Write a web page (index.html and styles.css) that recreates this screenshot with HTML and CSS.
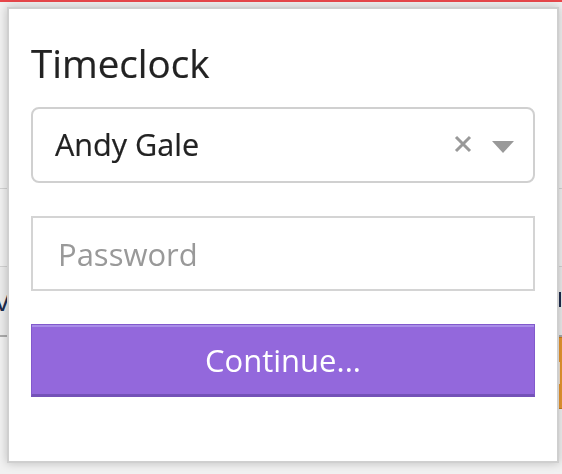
FILE: index.html
```html
<!DOCTYPE html>
<html lang="en">
<head>
<meta charset="utf-8">
<title>Timeclock</title>
<link rel="stylesheet" href="styles.css">
</head>
<body>
<div class="page">
  <div class="topbar"></div>
  <div class="row row-a"></div>
  <div class="row row-b"></div>
  <div class="row row-c">
    <span class="cut-word">Nov</span>
    <span class="cut-mark"></span>
  </div>
  <div class="row row-d">
    <span class="cut-button"><span class="cut-button-inner"></span></span>
  </div>
</div>

<div class="modal">
  <h1 class="title">Timeclock</h1>
  <div class="select">
    <span class="select-value">Andy Gale</span>
    <span class="select-icons">
      <svg class="icon-clear" width="18" height="18" viewBox="0 0 18 18" aria-hidden="true">
        <path d="M2 2 L16 16 M16 2 L2 16" stroke="#999" stroke-width="3" fill="none"/>
      </svg>
      <svg class="icon-caret" width="22" height="12" viewBox="0 0 22 12" aria-hidden="true">
        <path d="M0 0 H22 L11 12 Z" fill="#999"/>
      </svg>
    </span>
  </div>
  <div class="input"><span class="placeholder">Password</span></div>
  <div class="button">Continue...</div>
</div>
</body>
</html>
```

FILE: styles.css
```css
html, body {
  margin: 0;
  padding: 0;
}

body {
  background: #f1f1f1;
  font-family: "Open Sans", "Liberation Sans", sans-serif;
  overflow: hidden;
}

.page {
  display: flex;
  flex-direction: column;
}

.topbar {
  height: 2px;
  background: #e8474b;
}

.row {
  display: flex;
  justify-content: space-between;
  align-items: flex-start;
}

.row-a {
  height: 186px;
  border-bottom: 1px solid #d2d2d2;
}

.row-b {
  height: 77px;
  border-bottom: 1px solid #d2d2d2;
}

.row-c {
  height: 68px;
  border-bottom: 2px solid #ababab;
  align-items: center;
  background: #ececec;
}

.cut-word {
  font-size: 30px;
  color: #1c2c4e;
  margin-left: -46px;
  line-height: 30px;
  margin-top: -2px;
}

.cut-mark {
  width: 3px;
  height: 15px;
  background: #1d2b4d;
  margin-right: 1px;
  margin-top: -4px;
}

.row-d {
  justify-content: flex-end;
}

.cut-button {
  display: flex;
  align-items: center;
  width: 4px;
  height: 70px;
  background: #e8972f;
  border-top: 1px solid #c97c1e;
  border-bottom: 1px solid #c97c1e;
}

.cut-button-inner {
  width: 1px;
  height: 22px;
  margin-left: 1px;
  background: #f6e4cc;
}

.modal {
  position: fixed;
  left: 7px;
  top: 7px;
  width: 552px;
  height: 456px;
  box-sizing: border-box;
  background: #fff;
  border: 2px solid #cfcfcf;
  box-shadow: 0 0 9px rgba(0, 0, 0, 0.22);
  padding: 31px 22px 0;
  display: flex;
  flex-direction: column;
}

.title {
  margin: 0;
  font-size: 38.6px;
  font-weight: 400;
  line-height: 46px;
  color: #222;
  -webkit-text-stroke: 0.2px #222;
}

.select {
  margin-top: 21px;
  height: 76px;
  box-sizing: border-box;
  border: 2px solid #d0d0d0;
  border-radius: 8px;
  display: flex;
  align-items: center;
  justify-content: space-between;
  padding: 0 19px 0 22px;
}

.select-value {
  font-size: 30.6px;
  line-height: 40px;
  color: #222;
  margin-top: -3px;
  -webkit-text-stroke: 0.2px #222;
}

.select-icons {
  display: flex;
  align-items: center;
  gap: 20px;
}

.icon-clear {
  display: block;
  margin-top: -3px;
}

.icon-caret {
  display: block;
  margin-top: 3px;
}

.input {
  margin-top: 33px;
  height: 75px;
  box-sizing: border-box;
  border: 2px solid #d4d4d4;
  display: flex;
  align-items: center;
  padding: 0 24px 0 25px;
}

.placeholder {
  font-size: 31px;
  line-height: 40px;
  color: #999;
}

.button {
  margin-top: 33px;
  height: 73px;
  box-sizing: border-box;
  background: #9368dc;
  border: 1px solid #8259cc;
  border-bottom: 3px solid #7452b8;
  box-shadow: inset 0 2px 0 #a88de8;
  color: #fff;
  font-size: 31px;
  line-height: 40px;
  display: flex;
  align-items: center;
  justify-content: center;
}
```
